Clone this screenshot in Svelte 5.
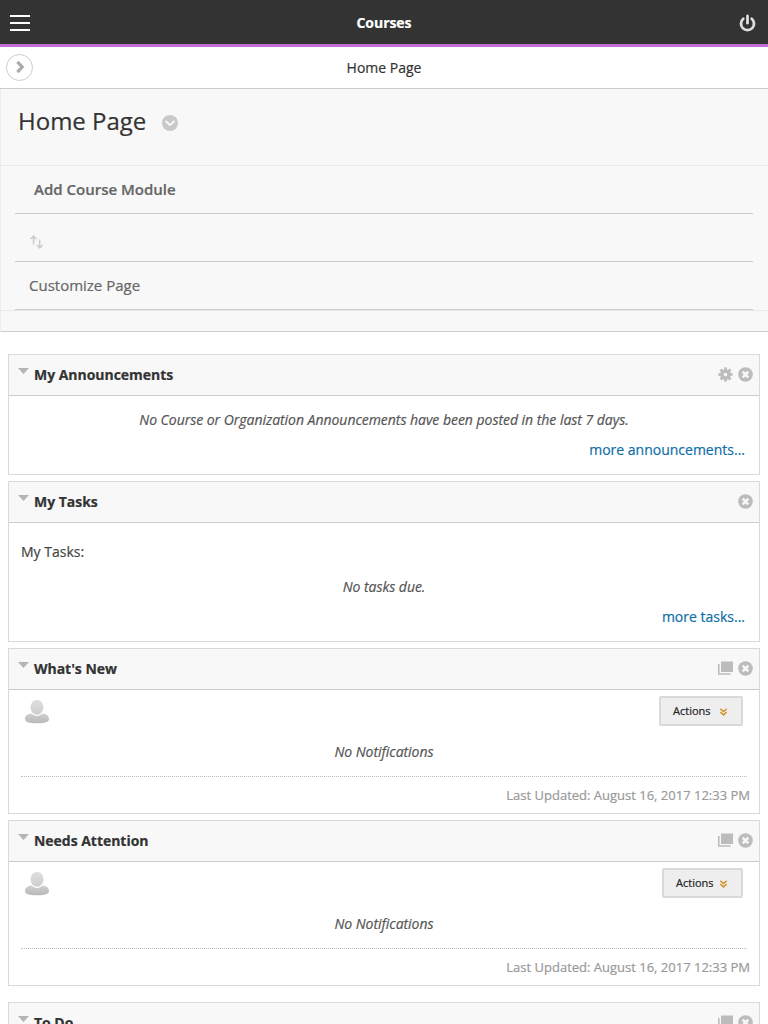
<script>
  const modules = [
    { title: 'My Announcements', icons: ['gear', 'close'], kind: 'announcements', height: 121 },
    { title: 'My Tasks', icons: ['close'], kind: 'tasks', height: 161 },
    { title: "What's New", icons: ['windows', 'close'], kind: 'notifications', height: 166, wide: true },
    { title: 'Needs Attention', icons: ['windows', 'close'], kind: 'notifications', height: 166, last: true },
    { title: 'To Do', icons: ['windows', 'close'], kind: 'todo', height: 166 }
  ];
</script>

{#snippet icon(name)}
  {#if name === 'gear'}
    <svg width="15" height="15" viewBox="0 0 15 15">
      <g fill="#bcbcbc">
        {#each [0, 45, 90, 135] as a}
          <rect x="6.1" y="0.4" width="2.8" height="14.200" transform="rotate({a} 7.5 7.5)" />
        {/each}
        <circle cx="7.5" cy="7.5" r="5.3" />
      </g>
      <circle cx="7.5" cy="7.5" r="1.8" fill="#f8f8f8" />
    </svg>
  {:else if name === 'windows'}
    <svg width="15" height="15" viewBox="0 0 15 15">
      <path d="M3 .5h12v10.500H3z" fill="#bcbcbc" />
      <path d="M0 3h1.600v9.200h11v1.500H0z" fill="#bcbcbc" />
    </svg>
  {:else}
    <svg width="15" height="15" viewBox="0 0 15 15">
      <circle cx="7.5" cy="7.5" r="7.3" fill="#bcbcbc" />
      <path d="M4.7 4.7l5.6 5.6M10.3 4.7l-5.6 5.6" stroke="#f8f8f8" stroke-width="2.5" />
    </svg>
  {/if}
{/snippet}

<div class="page">
  <header class="topbar">
    <svg class="menu" width="20" height="16" viewBox="0 0 20 16">
      <path d="M0 1h20M0 8h20M0 15h20" stroke="#fff" stroke-width="2" />
    </svg>
    <span class="title">Courses</span>
    <svg class="power" width="18" height="18" viewBox="0 0 18 18">
      <path d="M5.300 4.700a6.500 6.500 0 1 0 8.400 0" fill="none" stroke="#ddd" stroke-width="2.800" stroke-linecap="round" />
      <path d="M9.500 2v7" stroke="#292929" stroke-width="4.800" stroke-linecap="round" />
      <path d="M9.500 2v7.200" stroke="#ddd" stroke-width="2.800" stroke-linecap="round" />
    </svg>
  </header>

  <nav class="crumbs">
    <span class="open">
      <svg width="27" height="27" viewBox="0 0 27 27">
        <circle cx="13.5" cy="13.5" r="13" fill="#fff" stroke="#ccc" />
        <path d="M11.4 7.8l4.8 5.2-4.8 5.2" fill="none" stroke="#aaa" stroke-width="3.200" />
      </svg>
    </span>
    <span>Home Page</span>
  </nav>

  <section class="intro">
    <div class="heading">
      <h1>Home Page</h1>
      <svg width="16" height="16" viewBox="0 0 16 16">
        <circle cx="8" cy="8" r="8" fill="#c9c9c9" />
        <path d="M3.500 6l4.500 4 4.500-4" fill="none" stroke="#f8f8f8" stroke-width="2" />
      </svg>
    </div>
    <div class="actions">
      <div class="row strong">Add Course Module</div>
      <div class="row sort">
        <svg width="14" height="14" viewBox="0 0 14 14" fill="none" stroke="#ccc" stroke-width="1.5">
          <path d="M3.6 9.5V1.2M.7 4l2.9-2.9L6.5 4M9.7 4.5v8.3M6.8 10l2.9 2.9 2.9-2.9" />
        </svg>
      </div>
      <div class="row custom">Customize Page</div>
    </div>
  </section>

  <main>
    {#each modules as m}
      <section class="module" class:last={m.last} style="height: {m.height}px">
        <div class="module-head">
          <svg class="toggle" width="11" height="6" viewBox="0 0 11 6"><path d="M0 0h11L5.5 6z" fill="#b5b5b5" /></svg>
          <h2>{m.title}</h2>
          <div class="icons">
            {#each m.icons as name}{@render icon(name)}{/each}
          </div>
        </div>
        {#if m.kind === 'announcements'}
          <div class="body announcements">
            <p class="note">No Course or Organization Announcements have been posted in the last 7 days.</p>
            <p class="more"><a href="#more">more announcements...</a></p>
          </div>
        {:else if m.kind === 'tasks'}
          <div class="body tasks">
            <p class="label">My Tasks:</p>
            <p class="note">No tasks due.</p>
            <p class="more"><a href="#more">more tasks...</a></p>
          </div>
        {:else if m.kind === 'notifications'}
          <div class="body notifications">
            <div class="tools">
              <svg class="avatar" width="24" height="24" viewBox="0 0 24 24">
                <defs>
                  <linearGradient id="head" x1="0" y1="0" x2="0" y2="1">
                    <stop offset="0" stop-color="#e0e0e0" /><stop offset="1" stop-color="#cdcdcd" />
                  </linearGradient>
                  <linearGradient id="torso" x1="0" y1="0" x2="0" y2="1">
                    <stop offset="0" stop-color="#d0d0d0" /><stop offset="1" stop-color="#b8b8b8" />
                  </linearGradient>
                </defs>
                <path d="M0 19C0 15.500 3 13.800 6.500 13.500c3 2.800 8 2.800 11 0C21 13.800 24 15.500 24 19c0 3.200-4 4.300-12 4.300S0 22.200 0 19z" fill="url(#torso)" />
                <ellipse cx="12" cy="7.500" rx="7.200" ry="8.500" fill="#fff" />
                <ellipse cx="12" cy="7.300" rx="6.500" ry="7.500" fill="url(#head)" />
              </svg>
              <button class:wide={m.wide}>
                Actions
                <svg width="7" height="8" viewBox="0 0 7 8" fill="none" stroke="#cf942a" stroke-width="1.5">
                  <path d="M.3.700l3.200 2.800L6.700.700M.3 4.100l3.200 2.800 3.200-2.800" />
                </svg>
              </button>
            </div>
            <p class="note">No Notifications</p>
            <p class="updated"><span>Last Updated: August 16, 2017 12:33 PM</span></p>
          </div>
        {/if}
      </section>
    {/each}
  </main>
</div>

<style>
  :global(body) { margin: 0; background: #fff; overflow: hidden; }
  .page {
    height: 1024px;
    overflow: hidden;
    font: 14px/20px 'Open Sans', sans-serif;
    color: #333;
    box-sizing: border-box;
    -webkit-text-stroke: 0.2px;
  }
  svg { display: block; flex: none; }
  h1, h2, p { margin: 0; }
  .topbar {
    height: 44px;
    background: #333;
    border-bottom: 3px solid #c36fd1;
    display: grid;
    grid-template-columns: 30px 1fr 30px;
    align-items: center;
    color: #fff;
  }
  .menu { margin-left: 10px; }
  .power { margin-top: 1px; }
  .title { text-align: center; font-weight: 700; line-height: 44px; letter-spacing: -0.05px; padding-top: 1px; }
  .crumbs {
    height: 41px;
    border-bottom: 1px solid #ccc;
    display: grid;
    grid-template-columns: 33px 1fr 33px;
    align-items: center;
    text-align: center;
  }
  .open { padding-left: 6px; }
  .intro {
    height: 242px;
    background: #f8f8f8;
    border-bottom: 1px solid #ccc;
    border-left: 1px solid #eee;
  }
  .heading {
    height: 76px;
    border-bottom: 1px solid #e9e9e9;
    display: flex;
    gap: 16px;
    padding-left: 17px;
  }
  .heading h1 { font-size: 24px; font-weight: 400; line-height: 36px; margin-top: 14px; }
  .heading svg { margin-top: 26px; }
  .actions { padding: 0 15px 0 14px; border-bottom: 1px solid #e9e9e9; }
  .row {
    height: 47px;
    line-height: 47px;
    border-bottom: 1px solid #ccc;
    font-size: 15px;
    color: #666;
    padding-left: 14px;
  }
  .strong { font-weight: 600; padding-left: 19px; }
  .sort { display: flex; align-items: center; padding-left: 15px; }
  .sort svg { margin-top: 8px; }
  main { padding: 22px 8px 0; }
  .module {
    box-sizing: border-box;
    border: 1px solid #d9d9d9;
    margin-bottom: 6px;
  }
  .module.last { margin-bottom: 16px; }
  .module-head {
    height: 40px;
    background: #f8f8f8;
    border-bottom: 1px solid #ccc;
    display: flex;
    padding: 0 6px 0 9px;
  }
  .toggle { margin-top: 13px; }
  h2 { flex: 1; margin-left: 5px; font-size: 14px; line-height: 40px; font-weight: 700; letter-spacing: -0.03px; }
  .icons { display: flex; gap: 5px; padding-top: 11.5px; }
  .announcements { padding-top: 14px; }
  .note { text-align: center; font-style: italic; color: #555; letter-spacing: -0.03px; }
  .more { text-align: right; margin-top: 10px; padding-right: 14px; }
  .more a { color: #0d6ea8; text-decoration: none; }
  .tasks { padding-top: 19px; }
  .label { padding-left: 12px; margin-bottom: 15px; color: #444; }
  .notifications { padding: 6px 12px 0; }
  .tools { display: flex; justify-content: space-between; height: 30px; padding: 0 4px; margin-bottom: 16px; }
  .avatar { margin-top: 4px; }
  button {
    display: flex;
    align-items: center;
    justify-content: space-between;
    width: 81px;
    height: 30px;
    padding: 0 14px 0 12px;
    border: 2px solid #d9d9d9;
    border-radius: 2px;
    background: #eee;
    color: #222;
    font: 11px/26px 'Open Sans', sans-serif;
    box-sizing: border-box;
  }
  button.wide { width: 84px; }
  button svg { margin-top: 2px; }
  .updated {
    margin-top: 14px;
    border-top: 1px dotted #bbb;
    padding-top: 8px;
    text-align: right;
    font-size: 13px;
    color: #999;
  }
  .updated span { margin-right: -3px; }
</style>
